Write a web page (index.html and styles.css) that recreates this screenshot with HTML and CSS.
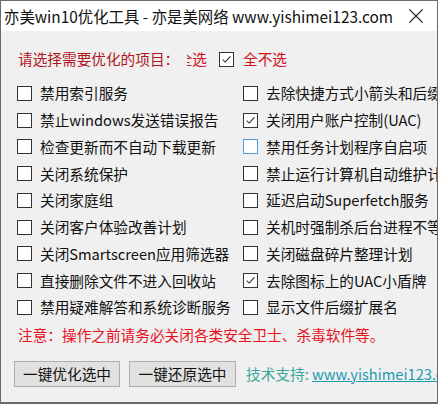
FILE: index.html
```html
<!DOCTYPE html>
<html lang="zh-CN">
<head>
<meta charset="utf-8">
<link rel="stylesheet" href="styles.css">
</head>
<body>
<div class="window">
  <div class="titlebar">
    <span class="title">亦美win10优化工具 - 亦是美网络 www.yishimei123.com</span>
    <span class="close"><svg width="14" height="14" viewBox="0 0 14 14"><path d="M0.5 0.5 L13.5 13.5 M13.5 0.5 L0.5 13.5" stroke="#222" stroke-width="1.1" fill="none"/></svg></span>
  </div>
  <div class="content">
    <div class="header">
      <span class="prompt">请选择需要优化的项目：</span>
      <span class="partial"><span>全选</span></span>
      <span class="box checked"><svg viewBox="0 0 15 15"><path d="M3 7.5 L6 10.5 L12 4" stroke="#222" stroke-width="1.2" fill="none"/></svg></span>
      <span class="allnone">全不选</span>
    </div>
    <div class="grid">
      <div class="item"><span class="box"></span><span class="lbl">禁用索引服务</span></div>
      <div class="item"><span class="box"></span><span class="lbl">去除快捷方式小箭头和后缀</span></div>
      <div class="item"><span class="box"></span><span class="lbl">禁止windows发送错误报告</span></div>
      <div class="item"><span class="box checked"><svg viewBox="0 0 15 15"><path d="M3 7.5 L6 10.5 L12 4" stroke="#222" stroke-width="1.2" fill="none"/></svg></span><span class="lbl">关闭用户账户控制(UAC)</span></div>
      <div class="item"><span class="box"></span><span class="lbl">检查更新而不自动下载更新</span></div>
      <div class="item"><span class="box hover"></span><span class="lbl">禁用任务计划程序自启项</span></div>
      <div class="item"><span class="box"></span><span class="lbl">关闭系统保护</span></div>
      <div class="item"><span class="box"></span><span class="lbl">禁止运行计算机自动维护计划</span></div>
      <div class="item"><span class="box"></span><span class="lbl">关闭家庭组</span></div>
      <div class="item"><span class="box"></span><span class="lbl">延迟启动Superfetch服务</span></div>
      <div class="item"><span class="box"></span><span class="lbl">关闭客户体验改善计划</span></div>
      <div class="item"><span class="box"></span><span class="lbl">关机时强制杀后台进程不等待</span></div>
      <div class="item"><span class="box"></span><span class="lbl">关闭Smartscreen应用筛选器</span></div>
      <div class="item"><span class="box"></span><span class="lbl">关闭磁盘碎片整理计划</span></div>
      <div class="item"><span class="box"></span><span class="lbl">直接删除文件不进入回收站</span></div>
      <div class="item"><span class="box checked"><svg viewBox="0 0 15 15"><path d="M3 7.5 L6 10.5 L12 4" stroke="#222" stroke-width="1.2" fill="none"/></svg></span><span class="lbl">去除图标上的UAC小盾牌</span></div>
      <div class="item"><span class="box"></span><span class="lbl">禁用疑难解答和系统诊断服务</span></div>
      <div class="item"><span class="box"></span><span class="lbl">显示文件后缀扩展名</span></div>
    </div>
    <div class="note">注意：操作之前请务必关闭各类安全卫士、杀毒软件等。</div>
    <div class="actions">
      <span class="btn b1">一键优化选中</span>
      <span class="btn b2">一键还原选中</span>
      <span class="support">技术支持: <span class="link">www.yishimei123.com</span></span>
    </div>
  </div>
</div>
</body>
</html>
```
FILE: styles.css
```css
html, body {
  margin: 0;
  padding: 0;
  background: #ffffff;
}
body {
  font-family: "Noto Sans CJK SC", "Noto Sans", sans-serif;
  color: #000;
}
.window {
  width: 438px;
  height: 404px;
  box-sizing: border-box;
  border: 1px solid #6a6a6a;
  border-bottom-width: 2px;
  display: flex;
  flex-direction: column;
  overflow: hidden;
}
.titlebar {
  height: 30px;
  flex: none;
  background: #ffffff;
  display: flex;
  align-items: center;
  padding-left: 3px;
}
.title {
  font-size: 15.4px;
  line-height: 20px;
  white-space: nowrap;
  color: #111;
}
.close {
  margin-left: auto;
  margin-right: 14px;
  display: flex;
  align-items: center;
  flex: none;
}
.content {
  flex: 1;
  background: #f0f0f0;
  display: flex;
  flex-direction: column;
  font-size: 14.67px;
}
.header {
  margin-top: 18px;
  height: 20px;
  display: flex;
  align-items: center;
  padding-left: 17px;
  white-space: nowrap;
  line-height: 20px;
}
.prompt {
  color: #b0141c;
  width: 169px;
  flex: none;
  overflow: hidden;
}
.partial {
  width: 20px;
  flex: none;
  overflow: hidden;
  display: flex;
  justify-content: flex-end;
  color: #d0101a;
}
.partial span {
  flex: none;
}
.header .box {
  margin-left: 12px;
}
.allnone {
  color: #d0101a;
  margin-left: 9px;
}
.box {
  width: 15px;
  height: 15px;
  box-sizing: border-box;
  border: 1px solid #333;
  background: #ffffff;
  flex: none;
  display: inline-flex;
}
.box svg {
  width: 13px;
  height: 13px;
}
.box.hover {
  border-color: #4a9ee0;
}
.grid {
  margin-top: 11px;
  display: grid;
  grid-template-columns: 226px 1fr;
  grid-auto-rows: 26.75px;
  padding-left: 16px;
}
.item {
  display: flex;
  align-items: center;
  white-space: nowrap;
  overflow: hidden;
  line-height: 20px;
}
.lbl {
  margin-left: 8px;
  color: #111;
}
.note {
  margin-top: 4px;
  padding-left: 17px;
  height: 20px;
  line-height: 20px;
  color: #e8101c;
  white-space: nowrap;
}
.actions {
  margin-top: 16px;
  display: flex;
  align-items: center;
  padding-left: 13px;
  white-space: nowrap;
}
.btn {
  height: 26px;
  box-sizing: border-box;
  border: 1px solid #adadad;
  background: #e1e1e1;
  display: flex;
  align-items: center;
  justify-content: center;
  color: #111;
  line-height: 20px;
  flex: none;
}
.b1 {
  width: 106px;
}
.b2 {
  width: 107px;
  margin-left: 9px;
}
.support {
  margin-left: 10px;
  color: #3aa89a;
  line-height: 20px;
}
.link {
  color: #1f9bb0;
  text-decoration: underline;
}
```
